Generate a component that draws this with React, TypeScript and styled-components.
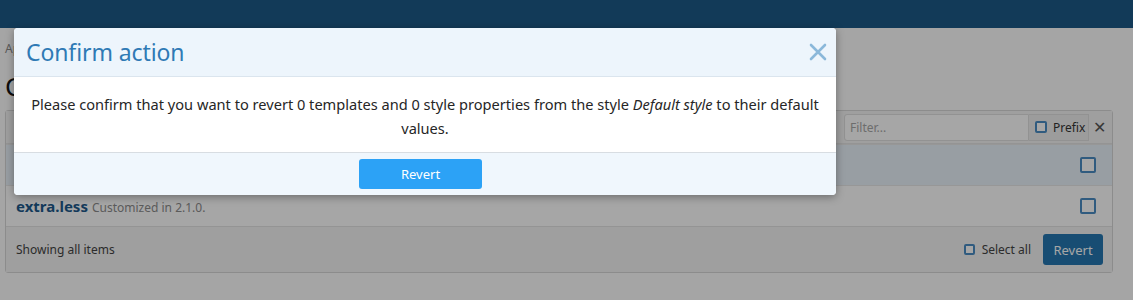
import React from "react";
import styled, { createGlobalStyle } from "styled-components";

const Global = createGlobalStyle`
  html, body { margin: 0; padding: 0; background: #fefefe; }
  body { font-family: "Noto Sans", "Open Sans", sans-serif; color: #141414; }
  * { box-sizing: border-box; }
`;

const Root = styled.div`
  position: relative;
  width: 1133px;
  height: 300px;
  overflow: hidden;
  background: #fefefe;
`;

const TopBar = styled.div`
  height: 28px;
  background: #1d5a87;
`;

const Content = styled.div`
  padding: 0 20px 0 5px;
`;

const Crumb = styled.div`
  margin-top: 13px;
  font-size: 12px;
  line-height: 16px;
  color: #8a8a8a;
`;

const Title = styled.h1`
  margin: 14px 0 0;
  font-size: 26px;
  font-weight: 400;
  line-height: 30px;
  color: #141414;
`;

const Block = styled.div`
  margin-top: 9px;
  border: 1px solid #d8d8d8;
  border-radius: 3px;
  background: #fff;
`;

const FilterBar = styled.div`
  display: flex;
  justify-content: flex-end;
  align-items: center;
  padding: 2px 3px 2px 0;
  background: #f5f5f5;
  border-bottom: 1px solid #e4e4e4;
  height: 33px;
`;

const FilterInput = styled.div`
  width: 185px;
  height: 27px;
  background: #fff;
  border: 1px solid #e0e0e0;
  border-radius: 3px 0 0 3px;
  font-size: 12px;
  color: #a8a8a8;
  display: flex;
  align-items: center;
  padding-left: 5px;
`;

const PrefixBox = styled.div`
  width: 60px;
  height: 27px;
  background: #f0f0f0;
  border: 1px solid #e0e0e0;
  border-left: none;
  display: flex;
  align-items: center;
  gap: 6px;
  padding-left: 6px;
  font-size: 12px;
  color: #333;
`;

const ClearX = styled.div`
  width: 20px;
  height: 27px;
  display: flex;
  align-items: center;
  justify-content: center;
  color: #555;
  font-size: 16px;
`;

const Box = styled.span<{ $size: number }>`
  display: inline-block;
  width: ${(p) => p.$size}px;
  height: ${(p) => p.$size}px;
  border: 2px solid #4a8cc4;
  border-radius: 2px;
  background: #fff;
  flex: none;
`;

const Row = styled.div<{ $hl?: boolean }>`
  height: 41px;
  display: flex;
  align-items: center;
  justify-content: space-between;
  padding: 0 16px 0 10px;
  background: ${(p) => (p.$hl ? "#eaf3fb" : "#fff")};
  border-top: 1px solid #e8e8e8;
`;

const Name = styled.span`
  font-size: 15px;
  font-weight: 700;
  color: #1e5a8c;
`;

const Hint = styled.span`
  font-size: 12px;
  color: #8c8c8c;
  margin-left: 4px;
`;

const Footer = styled.div`
  height: 46px;
  display: flex;
  align-items: center;
  justify-content: space-between;
  padding: 0 9px 0 10px;
  background: #f5f5f5;
  border-top: 1px solid #e4e4e4;
  font-size: 12px;
  color: #444;
`;

const FooterRight = styled.div`
  display: flex;
  align-items: center;
  gap: 12px;
`;

const SelectAll = styled.label`
  display: flex;
  align-items: center;
  gap: 7px;
`;

const PrimaryBtn = styled.button`
  width: 60px;
  height: 31px;
  border: none;
  border-radius: 3px;
  background: #2577b1;
  color: #fff;
  font-family: inherit;
  font-size: 13px;
`;

const Dim = styled.div`
  position: absolute;
  inset: 0;
  background: rgba(0, 0, 0, 0.35);
`;

const Modal = styled.div`
  position: absolute;
  left: 14px;
  top: 28px;
  width: 822px;
  background: #fff;
  border-radius: 4px;
  box-shadow: 0 2px 8px rgba(0, 0, 0, 0.35);
  overflow: hidden;
`;

const ModalHeader = styled.div`
  height: 49px;
  display: flex;
  align-items: center;
  justify-content: space-between;
  padding: 0 9px 0 12px;
  background: #edf5fc;
  border-bottom: 1px solid #dbe5ee;
`;

const ModalTitle = styled.h2`
  margin: 0;
  font-size: 23px;
  font-weight: 400;
  color: #2f7ab5;
  letter-spacing: -0.1px;
`;

const CloseBtn = styled.span`
  display: flex;
  width: 18px;
  height: 18px;
`;

const ModalBody = styled.div`
  padding: 15px 14px 12px;
  text-align: center;
  font-size: 14.6px;
  line-height: 24px;
  color: #262626;
`;

const ModalFooter = styled.div`
  height: 43px;
  display: flex;
  align-items: center;
  justify-content: center;
  padding-right: 9px;
  background: #f0f7fd;
  border-top: 1px solid #d8dde2;
`;

const ModalBtn = styled.button`
  width: 123px;
  height: 30px;
  border: none;
  border-radius: 3px;
  background: #2ca2f6;
  color: #fff;
  font-family: inherit;
  font-size: 13px;
`;

export default function App() {
  return (
    <Root>
      <Global />
      <TopBar />
      <Content>
        <Crumb>Appearance › Styles</Crumb>
        <Title>Customized templates: Default style</Title>
        <Block>
          <FilterBar>
            <FilterInput>Filter...</FilterInput>
            <PrefixBox>
              <Box $size={12} />
              Prefix
            </PrefixBox>
            <ClearX>✕</ClearX>
          </FilterBar>
          <Row $hl>
            <span />
            <Box $size={16} />
          </Row>
          <Row>
            <span>
              <Name>extra.less</Name>
              <Hint>Customized in 2.1.0.</Hint>
            </span>
            <Box $size={16} />
          </Row>
          <Footer>
            <span>Showing all items</span>
            <FooterRight>
              <SelectAll>
                <Box $size={11} />
                Select all
              </SelectAll>
              <PrimaryBtn>Revert</PrimaryBtn>
            </FooterRight>
          </Footer>
        </Block>
      </Content>
      <Dim />
      <Modal>
        <ModalHeader>
          <ModalTitle>Confirm action</ModalTitle>
          <CloseBtn>
            <svg width="18" height="18" viewBox="0 0 18 18">
              <path d="M2 2 L16 16 M16 2 L2 16" stroke="#8bb8da" strokeWidth="2.6" strokeLinecap="round" />
            </svg>
          </CloseBtn>
        </ModalHeader>
        <ModalBody>
          Please confirm that you want to revert 0 templates and 0 style properties from the style <i>Default style</i> to
          their default values.
        </ModalBody>
        <ModalFooter>
          <ModalBtn>Revert</ModalBtn>
        </ModalFooter>
      </Modal>
    </Root>
  );
}
